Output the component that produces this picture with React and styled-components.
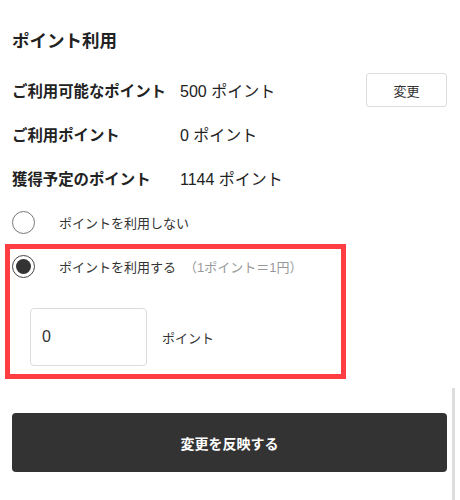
import styled, { createGlobalStyle } from 'styled-components';

const GlobalStyle = createGlobalStyle`
  body {
    margin: 0;
    background: #fff;
    font-family: "Liberation Sans", "Noto Sans CJK JP", sans-serif;
    color: #222;
  }
`;

const Page = styled.div`
  position: relative;
  width: 460px;
  height: 500px;
  overflow: hidden;
  box-sizing: border-box;
  padding: 29px 13px 0 12px;
`;

const Title = styled.h2`
  margin: 0 0 15px;
  font-size: 17.5px;
  line-height: 24px;
  font-weight: 700;
  color: #222;
`;

const InfoRow = styled.div`
  display: flex;
  align-items: center;
  height: 44px;
`;

const Label = styled.div`
  width: 168px;
  font-size: 15.4px;
  font-weight: 700;
  color: #222;
`;

const Value = styled.div`
  flex: 1;
  font-size: 16px;
  color: #222;
`;

const SmallButton = styled.button`
  width: 81px;
  height: 34px;
  border: 1px solid #dcdcdc;
  border-radius: 3px;
  background: #fff;
  font-family: inherit;
  font-size: 13px;
  color: #333;
`;

const RadioRow = styled.label`
  display: flex;
  align-items: center;
  height: ${(p) => p.$h || 44}px;
  font-size: 13px;
  color: #333;
`;

const RadioMark = styled.span`
  width: 23px;
  height: 23px;
  box-sizing: border-box;
  border-radius: 50%;
  border: 1.5px solid ${(p) => (p.$checked ? '#444' : '#777')};
  display: flex;
  align-items: center;
  justify-content: center;
  margin-right: 24px;
  flex-shrink: 0;

  &::after {
    content: '';
    display: ${(p) => (p.$checked ? 'block' : 'none')};
    width: 15px;
    height: 15px;
    border-radius: 50%;
    background: #333;
  }
`;

const Note = styled.span`
  margin-left: 8px;
  color: #999;
`;

const Highlight = styled.div`
  margin: 0 0 0 -7px;
  width: 341px;
  box-sizing: border-box;
  border: 5px solid #ff3d43;
  padding: 0 0 8px 2px;
`;

const AmountRow = styled.div`
  display: flex;
  align-items: center;
  gap: 15px;
  margin: 25px 0 0 18px;
`;

const AmountInput = styled.input`
  width: 117px;
  height: 58px;
  box-sizing: border-box;
  border: 1px solid #dcdcdc;
  border-radius: 4px;
  padding: 0 11px;
  font-family: inherit;
  font-size: 16px;
  color: #333;
  outline: none;
`;

const Unit = styled.span`
  font-size: 13px;
  color: #333;
`;

const SubmitButton = styled.button`
  display: block;
  width: 435px;
  height: 59px;
  margin-top: 34px;
  border: none;
  border-radius: 4px;
  background: #333;
  color: #fff;
  font-family: inherit;
  font-size: 14px;
  font-weight: 700;
`;

const ScrollTrack = styled.div`
  position: absolute;
  right: 5px;
  top: 388px;
  bottom: 0;
  width: 3px;
  background: #dedede;
`;

export default function App() {
  return (
    <>
      <GlobalStyle />
      <Page>
        <Title>ポイント利用</Title>
        <InfoRow>
          <Label>ご利用可能なポイント</Label>
          <Value>500 ポイント</Value>
          <SmallButton>変更</SmallButton>
        </InfoRow>
        <InfoRow>
          <Label>ご利用ポイント</Label>
          <Value>0 ポイント</Value>
        </InfoRow>
        <InfoRow>
          <Label>獲得予定のポイント</Label>
          <Value>1144 ポイント</Value>
        </InfoRow>
        <RadioRow>
          <RadioMark />
          ポイントを利用しない
        </RadioRow>
        <Highlight>
          <RadioRow $h={34}>
            <RadioMark $checked />
            ポイントを利用する
            <Note>（1ポイント＝1円）</Note>
          </RadioRow>
          <AmountRow>
            <AmountInput defaultValue="0" />
            <Unit>ポイント</Unit>
          </AmountRow>
        </Highlight>
        <SubmitButton>変更を反映する</SubmitButton>
        <ScrollTrack />
      </Page>
    </>
  );
}
